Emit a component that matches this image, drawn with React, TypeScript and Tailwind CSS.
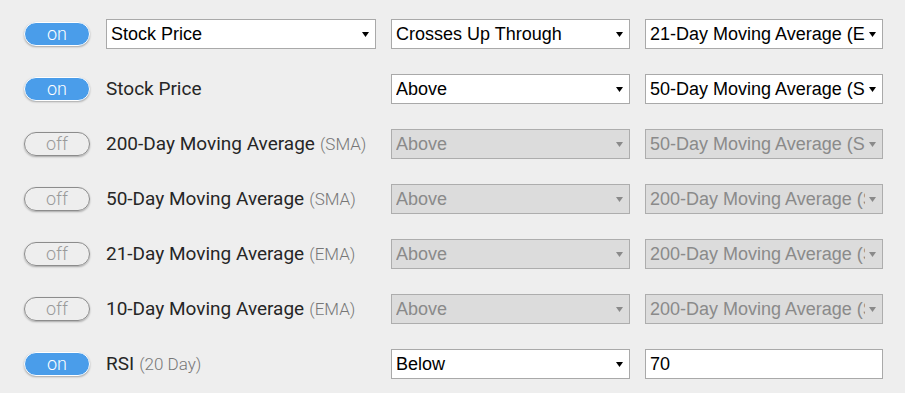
import React from "react";

type Row = {
  on: boolean;
  label?: string;
  sub?: string;
  picker?: string;
  op: string;
  target: string;
  input?: boolean;
};

const rows: Row[] = [
  { on: true, picker: "Stock Price", op: "Crosses Up Through", target: "21-Day Moving Average (EMA)" },
  { on: true, label: "Stock Price", op: "Above", target: "50-Day Moving Average (SMA)" },
  { on: false, label: "200-Day Moving Average", sub: "(SMA)", op: "Above", target: "50-Day Moving Average (SMA)" },
  { on: false, label: "50-Day Moving Average", sub: "(SMA)", op: "Above", target: "200-Day Moving Average (SMA)" },
  { on: false, label: "21-Day Moving Average", sub: "(EMA)", op: "Above", target: "200-Day Moving Average (SMA)" },
  { on: false, label: "10-Day Moving Average", sub: "(EMA)", op: "Above", target: "200-Day Moving Average (SMA)" },
  { on: true, label: "RSI", sub: "(20 Day)", op: "Below", target: "70", input: true },
];

function Toggle({ on }: { on: boolean }) {
  return (
    <div
      className={`w-[66px] h-[24px] rounded-full flex items-center justify-center text-[18px] leading-none font-light font-['Roboto',sans-serif] shadow-[0_1px_2px_rgba(0,0,0,0.3)] ${
        on
          ? "bg-[#4a9dea] border border-white text-white"
          : "border border-[#8c8c8c] text-[#9a9a9a]"
      }`}
    >
      <span className="-mt-[1px]">{on ? "on" : "off"}</span>
    </div>
  );
}

function Select({
  value,
  width,
  disabled,
}: {
  value: string;
  width: string;
  disabled?: boolean;
}) {
  return (
    <div
      className={`${width} h-[30px] shrink-0 border flex items-center pl-[4px] pr-[6px] font-['Liberation_Sans',Arial,sans-serif] text-[18px] ${
        disabled
          ? "bg-[#dcdcdc] border-[#adadad] text-[#8a8a8a]"
          : "bg-white border-[#a9a9a9] text-black"
      }`}
    >
      <span className="flex-1 min-w-0 overflow-hidden whitespace-nowrap mr-[4px]">
        {value}
      </span>
      <svg width="7" height="5" viewBox="0 0 7 5" className="shrink-0">
        <path d="M0 0h7L3.5 5z" fill={disabled ? "#8a8a8a" : "#000"} />
      </svg>
    </div>
  );
}

export default function App() {
  return (
    <div className="min-h-[393px] w-[905px] bg-[#eeeeee] pt-[19px] pl-[24px] flex flex-col gap-[25px]">
      {rows.map((row, i) => {
        const disabled = !row.on;
        return (
          <div key={i} className="flex items-center h-[30px]">
            <Toggle on={row.on} />
            <div className="ml-[16px] w-[270px] shrink-0 flex items-center">
              {row.picker ? (
                <Select value={row.picker} width="w-[270px]" />
              ) : (
                <div className="font-['Roboto',sans-serif] whitespace-nowrap">
                  <span className="text-[19px] text-[#262626]">{row.label}</span>
                  {row.sub && (
                    <span className="text-[17px] font-light text-[#777777] ml-[5px]">{row.sub}</span>
                  )}
                </div>
              )}
            </div>
            <div className="ml-[15px]">
              <Select value={row.op} width="w-[239px]" disabled={disabled} />
            </div>
            <div className="ml-[15px]">
              {row.input ? (
                <div className="w-[238px] h-[30px] border border-[#a9a9a9] bg-white flex items-center pl-[4px] font-['Liberation_Sans',Arial,sans-serif] text-[18px] text-black">
                  {row.target}
                </div>
              ) : (
                <Select value={row.target} width="w-[238px]" disabled={disabled} />
              )}
            </div>
          </div>
        );
      })}
    </div>
  );
}
